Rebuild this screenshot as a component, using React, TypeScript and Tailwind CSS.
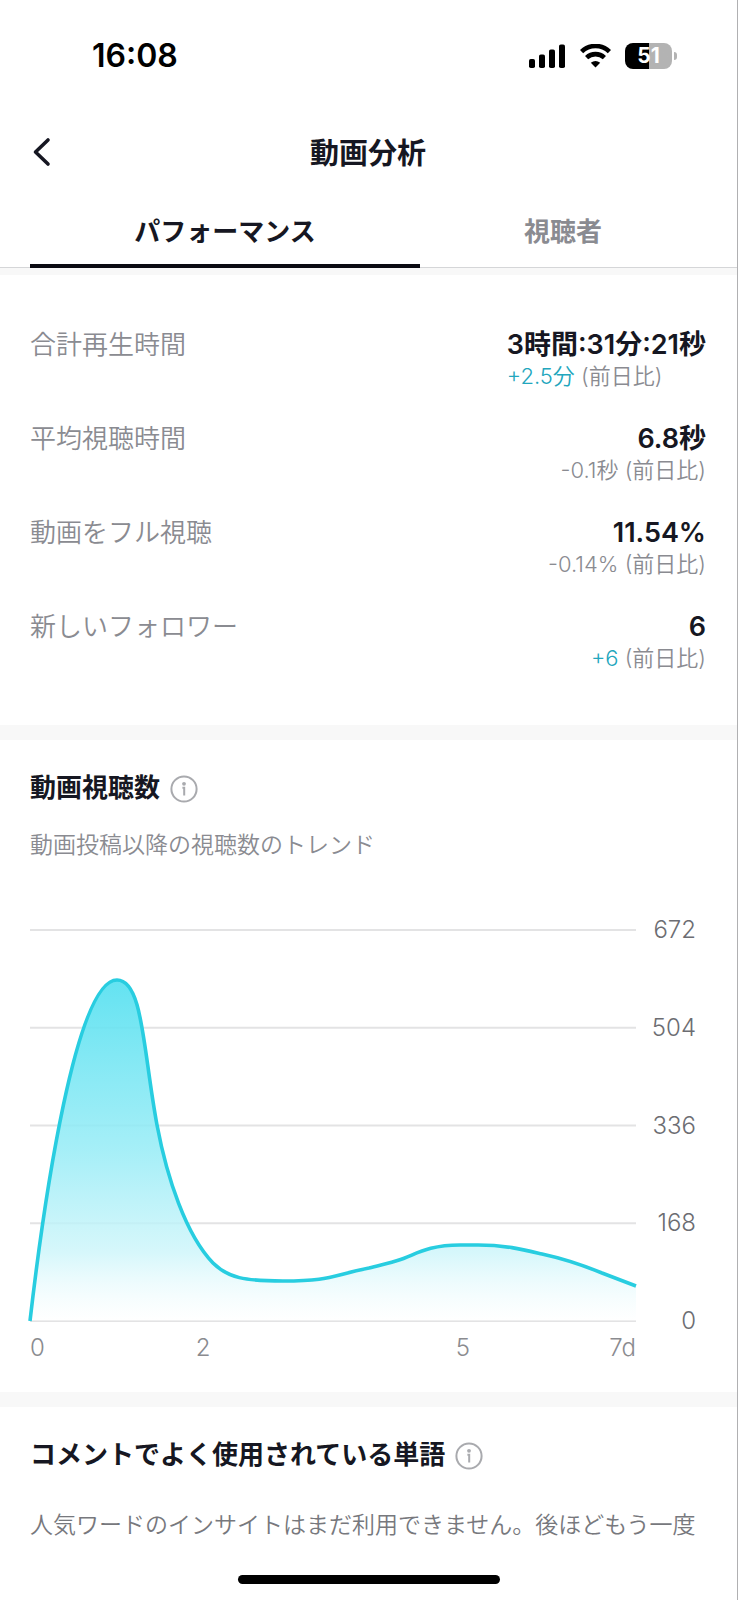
import { clsx } from "clsx";

type Metric = {
  label: string;
  value: string;
  delta: string;
  positive?: boolean;
};

const metrics: Metric[] = [
  { label: "合計再生時間", value: "3時間:31分:21秒", delta: "+2.5分", positive: true },
  { label: "平均視聴時間", value: "6.8秒", delta: "-0.1秒" },
  { label: "動画をフル視聴", value: "11.54%", delta: "-0.14%" },
  { label: "新しいフォロワー", value: "6", delta: "+6", positive: true }
];

const tabs = [
  { id: "performance", label: "パフォーマンス", active: true },
  { id: "viewers", label: "視聴者", active: false }
];

const yTicks = [672, 504, 336, 168, 0];

const curve =
  "M0 391C14 270 46 50 87 50C113 50 113 120 127 195C137 248 156 305 183 333C198 348 215 351 253 351C300 351 300 346 339 338C350 335 360 333 369 330C385 325 397 315 430 315H448C476 315 495 320 512 324C535 329 555 336 572 343L606 356";

function SignalIcon() {
  return (
    <svg viewBox="0 0 37 24" className="h-6 w-[37px]" aria-hidden="true">
      <rect x="0" y="15" width="6" height="9" rx="1.8" />
      <rect x="10" y="10.5" width="6" height="13.5" rx="1.8" />
      <rect x="20" y="5.5" width="6" height="18.5" rx="1.8" />
      <rect x="30" y="0.5" width="6" height="23.5" rx="1.8" />
    </svg>
  );
}

function WifiIcon() {
  return (
    <svg viewBox="0 0 31 24" className="h-6 w-[31px]" aria-hidden="true">
      <path d="M1.6 7.6A20 20 0 0 1 29.4 7.6" fill="none" stroke="#000" strokeWidth="4.6" />
      <path d="M6.6 13.6A13 13 0 0 1 24.4 13.6" fill="none" stroke="#000" strokeWidth="4.6" />
      <path d="M10.8 18.8Q15.5 15.2 20.2 18.8L15.5 23.6Z" />
    </svg>
  );
}

function Battery() {
  return (
    <div className="flex items-center gap-0.5">
      <div className="flex h-[26px] w-[47px] items-center justify-center rounded-lg bg-linear-to-r from-black from-51% to-[#b3b3b3] to-51% text-[21px] leading-none font-bold text-white">
        51
      </div>
      <div className="h-2 w-[3px] rounded-r-full bg-[#b3b3b3]" />
    </div>
  );
}

function InfoButton({ label }: { label: string }) {
  return (
    <button type="button" aria-label={label} className="mt-0.5">
      <svg viewBox="0 0 28 28" className="size-7" fill="none" stroke="#a9aaae">
        <circle cx="14" cy="14" r="12.6" strokeWidth="2" />
        <circle cx="14" cy="8.8" r="1.9" fill="#a9aaae" stroke="none" />
        <path d="M12.4 12.8H14.2V20.6" strokeWidth="2" />
      </svg>
    </button>
  );
}

function SectionTitle({ children }: { children: string }) {
  return (
    <div className="flex h-9 items-center gap-2.5">
      <h2 className="text-[26px] leading-9 font-bold">{children}</h2>
      <InfoButton label={`${children}の説明`} />
    </div>
  );
}

function ViewsChart() {
  return (
    <div className="mt-[69px]">
      <div className="flex">
        <svg
          viewBox="0 0 606 391"
          preserveAspectRatio="none"
          className="h-[391px] min-w-0 flex-1 overflow-visible"
          role="img"
          aria-label="動画視聴数"
        >
          <defs>
            <linearGradient id="views-fill" x1="0" y1="0" x2="0" y2="1">
              <stop offset="0" stopColor="#56e0f0" stopOpacity="0.92" />
              <stop offset="0.5" stopColor="#96ecf6" stopOpacity="0.85" />
              <stop offset="0.8" stopColor="#ccf5fa" stopOpacity="0.8" />
              <stop offset="1" stopColor="#ffffff" stopOpacity="0.4" />
            </linearGradient>
          </defs>
          {yTicks.map((tick, i) => (
            <line key={tick} x1="0" x2="606" y1={i * 97.75} y2={i * 97.75} stroke="#e3e3e4" strokeWidth="1.8" />
          ))}
          <path d={`${curve}V391H0Z`} fill="url(#views-fill)" />
          <path d={curve} fill="none" stroke="#28cde0" strokeWidth="3.6" vectorEffect="non-scaling-stroke" />
        </svg>
        <div className="-my-4 flex w-[70px] flex-col justify-between pr-2.5 text-right text-2xl leading-8 font-[350] text-[#6c6d72]">
          {yTicks.map((tick) => (
            <span key={tick}>{tick}</span>
          ))}
        </div>
      </div>
      <div className="mt-[11px] mr-[70px] grid grid-cols-[1.5fr_1fr_2fr_1fr_1.5fr] text-2xl leading-8 font-[350] text-[#8a8b8f]">
        <span>0</span>
        <span className="text-center">2</span>
        <span className="col-start-4 text-center">5</span>
        <span className="text-right">7d</span>
      </div>
    </div>
  );
}

export default function App() {
  return (
    <div className="flex min-h-screen flex-col border-r border-[#b0b0b2] bg-white font-['Inter','Noto_Sans_CJK_JP',sans-serif] text-[#161722]">
      <div className="flex h-[110px] items-center justify-between pt-px pr-[60px] pl-[92px] text-black">
        <span className="text-[32px] leading-9 font-semibold">16:08</span>
        <div className="flex items-center gap-3.5">
          <SignalIcon />
          <WifiIcon />
          <Battery />
        </div>
      </div>

      <header className="grid h-[84px] grid-cols-[1fr_auto_1fr] items-center pr-[31px] pl-[30px]">
        <button type="button" aria-label="戻る" className="justify-self-start">
          <svg viewBox="0 0 24 30" className="h-[30px] w-6" fill="none" stroke="currentColor">
            <path d="M18 3L5.5 15L18 27" strokeWidth="3.6" strokeLinecap="round" strokeLinejoin="round" />
          </svg>
        </button>
        <h1 className="pt-1 text-[29px] leading-10 font-bold">動画分析</h1>
      </header>

      <div role="tablist" className="flex h-[74px] border-b border-[#d5d6d8] pr-[31px] pl-[30px]">
        {tabs.map((tab) => (
          <button
            key={tab.id}
            type="button"
            role="tab"
            aria-selected={tab.active}
            className={clsx(
              "-mb-px border-b-4 pt-1.5 text-[26px] leading-9 font-bold",
              tab.active ? "grow-[390] basis-0 border-[#0b0b12]" : "grow-[286] basis-0 border-transparent text-[#8a8b91]"
            )}
          >
            {tab.label}
          </button>
        ))}
      </div>
      <div className="h-[7px] bg-[#f8f8f8]" />

      <dl className="flex flex-col gap-8 pt-[54px] pr-[31px] pb-[52px] pl-[30px]">
        {metrics.map((metric) => (
          <div key={metric.label} className="flex items-start justify-between">
            <dt className="text-[26px] leading-8 font-[350] text-[#8a8b91]">{metric.label}</dt>
            <dd>
              <p className="text-right text-[27px] leading-8 font-semibold">{metric.value}</p>
              <p className="text-[22px] leading-[30px] font-[350] text-[#8a8b91]">
                <span className={clsx(metric.positive && "text-[#22a6bd]")}>{metric.delta}</span> (前日比)
              </p>
            </dd>
          </div>
        ))}
      </dl>
      <div className="h-[15px] bg-[#f8f8f8]" />

      <section className="pt-[30px] pr-[31px] pb-7 pl-[30px]">
        <SectionTitle>動画視聴数</SectionTitle>
        <p className="mt-[23px] text-[23px] leading-8 font-[350] text-[#8a8b91]">動画投稿以降の視聴数のトレンド</p>
        <ViewsChart />
      </section>
      <div className="h-[15px] bg-[#f8f8f8]" />

      <section className="pt-[30px] pl-[30px]">
        <SectionTitle>コメントでよく使用されている単語</SectionTitle>
        <p className="mt-9 overflow-hidden text-[23px] leading-8 font-[350] whitespace-nowrap text-[#77787d]">
          人気ワードのインサイトはまだ利用できません。後ほどもう一度
        </p>
      </section>

      <div className="mt-[34px] mb-4 h-[9px] w-[262px] self-center rounded-full bg-black" />
    </div>
  );
}
